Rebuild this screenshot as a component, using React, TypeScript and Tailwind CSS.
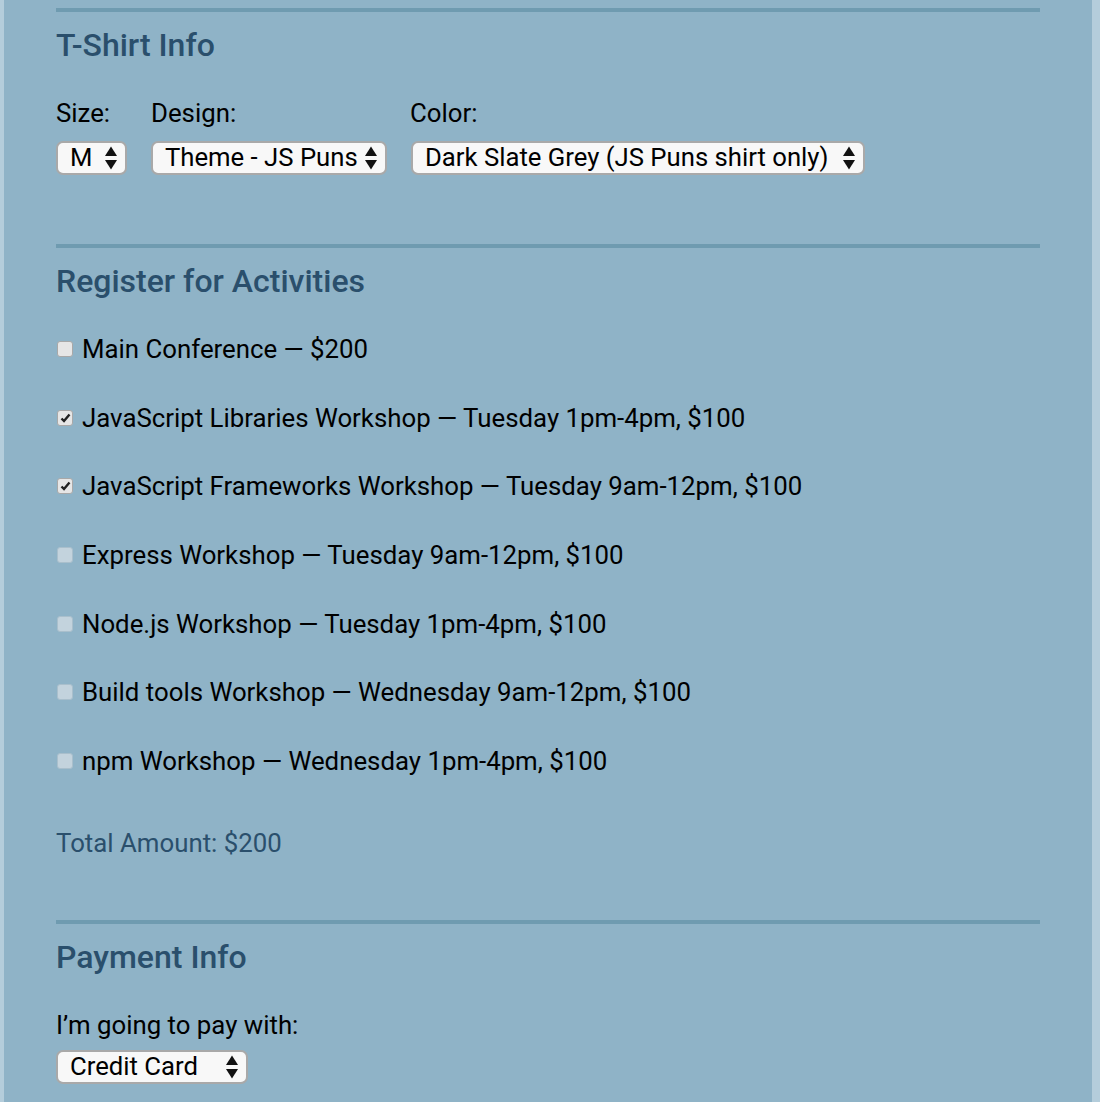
import React from "react";

const activities = [
  { label: "Main Conference — $200", checked: false, disabled: false },
  { label: "JavaScript Libraries Workshop — Tuesday 1pm-4pm, $100", checked: true, disabled: false },
  { label: "JavaScript Frameworks Workshop — Tuesday 9am-12pm, $100", checked: true, disabled: false },
  { label: "Express Workshop — Tuesday 9am-12pm, $100", checked: false, disabled: true },
  { label: "Node.js Workshop — Tuesday 1pm-4pm, $100", checked: false, disabled: true },
  { label: "Build tools Workshop — Wednesday 9am-12pm, $100", checked: false, disabled: true },
  { label: "npm Workshop — Wednesday 1pm-4pm, $100", checked: false, disabled: true },
];

function Arrows() {
  return (
    <svg width="14" height="26" viewBox="0 0 14 26" className="shrink-0">
      <path d="M7 1.5 L13 11 L1 11 Z" fill="#111" />
      <path d="M1 15 L13 15 L7 24.5 Z" fill="#111" />
    </svg>
  );
}

function FakeSelect({ value, width }: { value: string; width: string }) {
  return (
    <div
      className={`${width} h-[34px] flex items-center justify-between pl-[12px] pr-[7px] bg-[#f8f8f8] border-2 border-[#a9a9a9] rounded-[7px] text-[25.7px] text-black`}
    >
      <span className="whitespace-nowrap leading-none">{value}</span>
      <Arrows />
    </div>
  );
}

function Checkbox({ checked, disabled }: { checked: boolean; disabled: boolean }) {
  return (
    <div
      className={`w-[16px] h-[16px] ml-[1px] rounded-[3px] border-[1.5px] flex items-center justify-center shrink-0 ${
        disabled ? "bg-[#c3d3dd] border-[#a9bfcc]" : "bg-[#e6e6e6] border-[#a8a8a8]"
      }`}
    >
      {checked && (
        <svg width="11" height="10" viewBox="0 0 11 10">
          <path d="M1.5 5.5 L4 8 L9.5 1.5" fill="none" stroke="#222" strokeWidth="2.4" />
        </svg>
      )}
    </div>
  );
}

function Rule() {
  return <div className="h-[4px] bg-[#6f9bb0]" />;
}

function Heading({ children }: { children: React.ReactNode }) {
  return (
    <h2 className="mt-[15px] h-[36px] leading-[36px] text-[32px] font-medium text-[#2a4f6c]">
      {children}
    </h2>
  );
}

export default function App() {
  return (
    <div className="flex w-[1100px] h-[1102px] overflow-hidden bg-[#8fb3c7] font-['Roboto',sans-serif]">
      <div className="w-[4px] bg-[#b4cddb]" />
      <div className="flex-1 px-[52px] pt-[8px]">
        {/* T-Shirt */}
        <Rule />
        <Heading>T-Shirt Info</Heading>
        <div className="mt-[36px] flex gap-[24px] text-[25.8px] text-black">
          <div className="flex flex-col">
            <span className="h-[28px] leading-[28px]">Size:</span>
            <div className="mt-[14px]">
              <FakeSelect value="M" width="w-[71px]" />
            </div>
          </div>
          <div className="flex flex-col">
            <span className="h-[28px] leading-[28px]">Design:</span>
            <div className="mt-[14px]">
              <FakeSelect value="Theme - JS Puns" width="w-[236px]" />
            </div>
          </div>
          <div className="flex flex-col -ml-[1px]">
            <span className="h-[28px] leading-[28px]">Color:</span>
            <div className="mt-[14px] ml-[1px]">
              <FakeSelect value="Dark Slate Grey (JS Puns shirt only)" width="w-[454px]" />
            </div>
          </div>
        </div>

        <div className="mt-[69px]">
          <Rule />
        </div>
        <Heading>Register for Activities</Heading>
        <div className="mt-[36px] flex flex-col gap-[40.67px]">
          {activities.map((a) => (
            <div key={a.label} className="h-[28px] flex items-center gap-[9px] text-[25.8px] text-black">
              <Checkbox checked={a.checked} disabled={a.disabled} />
              <span className="leading-[28px] whitespace-nowrap">{a.label}</span>
            </div>
          ))}
        </div>
        <p className="mt-[54px] h-[28px] leading-[28px] text-[25.8px] text-[#2a4f6c]">Total Amount: $200</p>

        <div className="mt-[63px]">
          <Rule />
        </div>
        <Heading>Payment Info</Heading>
        <p className="mt-[36px] h-[28px] leading-[28px] text-[25.8px] text-black">I’m going to pay with:</p>
        <div className="mt-[11px]">
          <FakeSelect value="Credit Card" width="w-[192px]" />
        </div>
      </div>
      <div className="w-[8px] bg-[#b4cddb]" />
    </div>
  );
}
